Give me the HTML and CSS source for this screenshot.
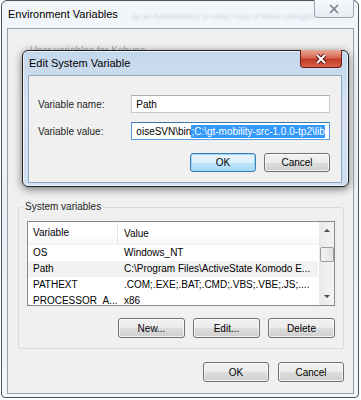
FILE: index.html
```html
<!DOCTYPE html>
<html lang="en">
<head>
<meta charset="UTF-8">
<title>Environment Variables</title>
<link rel="stylesheet" href="styles.css">
</head>
<body>

<div class="window">
  <div class="titlebar">
    <span class="title">Environment Variables</span>
    <span class="ghost">as an Administrator to make most of these changes</span>
    <span class="caption-btn">
      <svg width="12" height="10" viewBox="0 0 12 10"><path d="M2 1 L10 9 M10 1 L2 9" stroke="#fff" stroke-width="4"/><path d="M2 1 L10 9 M10 1 L2 9" stroke="#8a939e" stroke-width="2"/></svg>
    </span>
  </div>

  <div class="client">
    <div class="user-group">User variables for Kahuna</div>

    <fieldset class="group">
      <legend>System variables</legend>
      <div class="list">
        <div class="list-body">
          <div class="list-head">
            <span class="col-var">Variable</span>
            <span class="col-val">Value</span>
          </div>
          <div class="row"><span class="col-var">OS</span><span class="col-val">Windows_NT</span></div>
          <div class="row hot"><span class="col-var">Path</span><span class="col-val">C:\Program Files\ActiveState Komodo E...</span></div>
          <div class="row"><span class="col-var">PATHEXT</span><span class="col-val">.COM;.EXE;.BAT;.CMD;.VBS;.VBE;.JS;....</span></div>
          <div class="row"><span class="col-var">PROCESSOR_A...</span><span class="col-val">x86</span></div>
        </div>
        <div class="scrollbar">
          <span class="arrow up"></span>
          <span class="thumb"></span>
          <span class="track"></span>
          <span class="arrow down"></span>
        </div>
      </div>
      <div class="btn-row">
        <button>New...</button>
        <button>Edit...</button>
        <button>Delete</button>
      </div>
    </fieldset>

    <div class="btn-row footer">
      <button>OK</button>
      <button>Cancel</button>
    </div>
  </div>

  <!-- modal edit dialog lying over the main window -->
  <div class="dialog">
    <div class="titlebar dlg-titlebar">
      <span class="title">Edit System Variable</span>
      <span class="caption-btn red">
        <svg width="12" height="10" viewBox="0 0 12 10"><path d="M2 1 L10 9 M10 1 L2 9" stroke="#5a1a10" stroke-width="4"/><path d="M2 1 L10 9 M10 1 L2 9" stroke="#fff" stroke-width="2"/></svg>
      </span>
    </div>
    <div class="dlg-client">
      <div class="field">
        <label>Variable name:</label>
        <div class="input"><span>Path</span></div>
      </div>
      <div class="field">
        <label>Variable value:</label>
        <div class="input focus"><span>oiseSVN\bin</span><span class="sel">;C:\gt-mobility-src-1.0.0-tp2\lib</span></div>
      </div>
      <div class="btn-row dlg-buttons">
        <button class="default">OK</button>
        <button>Cancel</button>
      </div>
    </div>
  </div>
</div>

</body>
</html>
```

FILE: styles.css
```css
body {
  margin: 0;
  background-color: #fff;
  font-family: "Liberation Sans", Arial, sans-serif;
  font-size: 10px;
  color: #000;
}

.window {
  position: relative;
  box-sizing: border-box;
  width: 358px;
  height: 398px;
  margin-left: 1px;
  border: 1px solid #4d5359;
  border-radius: 6px 6px 4px 4px;
  background: linear-gradient(to bottom, #f2f6fa, #e9f0f7 60%, #f3f6f9);
  display: flex;
  flex-direction: column;
}

.titlebar {
  display: flex;
  align-items: flex-start;
  height: 27px;
  padding-left: 6px;
}

.title {
  padding-top: 7px;
  font-size: 11px;
  line-height: 13px;
  white-space: nowrap;
}

.ghost {
  flex: 1;
  padding-top: 10px;
  padding-left: 14px;
  font-size: 8px;
  line-height: 11px;
  color: #c8d4e1;
  filter: blur(1px);
  white-space: nowrap;
}

.caption-btn {
  box-sizing: border-box;
  width: 42px;
  height: 18px;
  margin-top: -1px;
  margin-right: 4px;
  border: 1px solid #9aa6b3;
  border-top: none;
  border-radius: 0 0 4px 4px;
  background: linear-gradient(to bottom, #f7f9fb, #e6ecf2);
  display: flex;
  align-items: center;
  justify-content: center;
}

.caption-btn.red {
  margin-right: 6px;
  border-color: #6a2114;
  background: linear-gradient(to bottom, #eaa797, #d86a54 45%, #c13a22 55%, #d6604a);
}

.client {
  box-sizing: border-box;
  width: 347px;
  height: 366px;
  margin-left: 5px;
  border: 1px solid #9b9fa5;
  background-color: #f0f0f0;
  display: flex;
  flex-direction: column;
}

.user-group {
  box-sizing: border-box;
  height: 172px;
  padding: 16px 0 0 22px;
  line-height: 12px;
  color: #a4aab0;
  filter: blur(0.7px);
}

.group {
  margin: 0 9px 0 10px;
  padding: 8px 8px 10px 8px;
  border: 1px solid #d5dadf;
  border-radius: 3px;
  min-width: 0;
}

.group legend {
  margin-left: -4px;
  padding: 0 2px;
  line-height: 12px;
  color: #1e1e1e;
}

.list {
  box-sizing: border-box;
  height: 85px;
  border: 1px solid #828790;
  background-color: #fff;
  display: flex;
  overflow: hidden;
}

.list-body {
  flex: 1;
  min-width: 0;
}

.list-head {
  display: flex;
  height: 22px;
  align-items: center;
  border-bottom: 1px solid #eef0f2;
  background: linear-gradient(to bottom, #fff, #fff 60%, #f6f7f9);
}

.list-head .col-var {
  border-right: 1px solid #e3e6ea;
  height: 22px;
  line-height: 22px;
}

.row {
  display: flex;
  height: 16px;
  line-height: 16px;
  margin-right: 1px;
}

.row.hot {
  background-color: #f2f2f2;
}

.col-var {
  box-sizing: border-box;
  width: 90px;
  padding-left: 5px;
  white-space: nowrap;
  overflow: hidden;
}

.col-val {
  flex: 1;
  padding-left: 6px;
  white-space: nowrap;
  overflow: hidden;
}

.scrollbar {
  width: 15px;
  display: flex;
  flex-direction: column;
  align-items: center;
  background: linear-gradient(to right, #e8e8e8, #f4f4f4);
}

.arrow {
  height: 17px;
  width: 15px;
  display: flex;
  align-items: center;
  justify-content: center;
}

.arrow::after {
  content: "";
  border-left: 3px solid transparent;
  border-right: 3px solid transparent;
}

.arrow.up::after {
  border-bottom: 3px solid #4a4a4a;
}

.arrow.down::after {
  border-top: 3px solid #4a4a4a;
}

.thumb {
  box-sizing: border-box;
  width: 14px;
  height: 15px;
  margin-top: 8px;
  border: 1px solid #9c9c9c;
  border-radius: 2px;
  background: linear-gradient(to right, #f3f3f3, #e2e2e2);
}

.track {
  flex: 1;
}

.btn-row {
  display: flex;
  justify-content: flex-end;
  gap: 8px;
  margin-top: 12px;
}

.footer {
  margin-top: 13px;
  margin-right: 9px;
  gap: 9px;
}

button {
  box-sizing: border-box;
  width: 67px;
  height: 20px;
  padding: 0;
  border: 1px solid #707070;
  border-radius: 3px;
  background: linear-gradient(to bottom, #f2f2f2, #ebebeb 50%, #dddddd 50%, #cfcfcf);
  box-shadow: inset 0 0 0 1px rgba(255, 255, 255, 0.7);
  font-family: "Liberation Sans", Arial, sans-serif;
  font-size: 10px;
  color: #000;
}

.footer button {
  width: 66px;
}

.dialog {
  position: absolute;
  left: 20px;
  top: 49px;
  box-sizing: border-box;
  width: 327px;
  height: 137px;
  border: 1px solid #1f2326;
  border-radius: 6px;
  background: linear-gradient(to bottom, #c4d7ec, #d4e2f1 40%, #cfdff0);
  box-shadow: 0 2px 8px rgba(0, 0, 0, 0.55), inset 0 0 0 1px rgba(255, 255, 255, 0.6);
  display: flex;
  flex-direction: column;
}

.dlg-titlebar {
  height: 24px;
}

.dlg-titlebar .title {
  padding-top: 6px;
}

.dlg-titlebar .caption-btn {
  margin-left: auto;
}

.dlg-client {
  box-sizing: border-box;
  width: 314px;
  height: 108px;
  margin-left: 5px;
  padding: 19px 11px 0 9px;
  border: 1px solid #8fa7bf;
  background-color: #f0f0f0;
}

.field {
  display: flex;
  align-items: center;
  margin-bottom: 9px;
}

.field label {
  width: 94px;
  color: #1e1e1e;
}

.input {
  box-sizing: border-box;
  width: 200px;
  height: 18px;
  padding: 0 4px;
  border: 1px solid #c6cbd1;
  border-top-color: #abadb3;
  background-color: #fff;
  display: flex;
  align-items: center;
  white-space: nowrap;
  overflow: hidden;
}

.input.focus {
  border-color: #569de5;
  border-top-color: #3d7bad;
}

.input span {
  flex-shrink: 0;
}

.sel {
  background-color: #3399ff;
  color: #fff;
  line-height: 13px;
}

.dlg-buttons {
  margin-top: 13px;
}

.dlg-buttons button {
  width: 66px;
  height: 19px;
}

button.default {
  border-color: #3c7fb1;
  box-shadow: inset 0 0 0 1px #9fd5f5;
  background: linear-gradient(to bottom, #eaf6fd, #d9f0fc 50%, #bee6fd 50%, #a7d9f5);
}
```
